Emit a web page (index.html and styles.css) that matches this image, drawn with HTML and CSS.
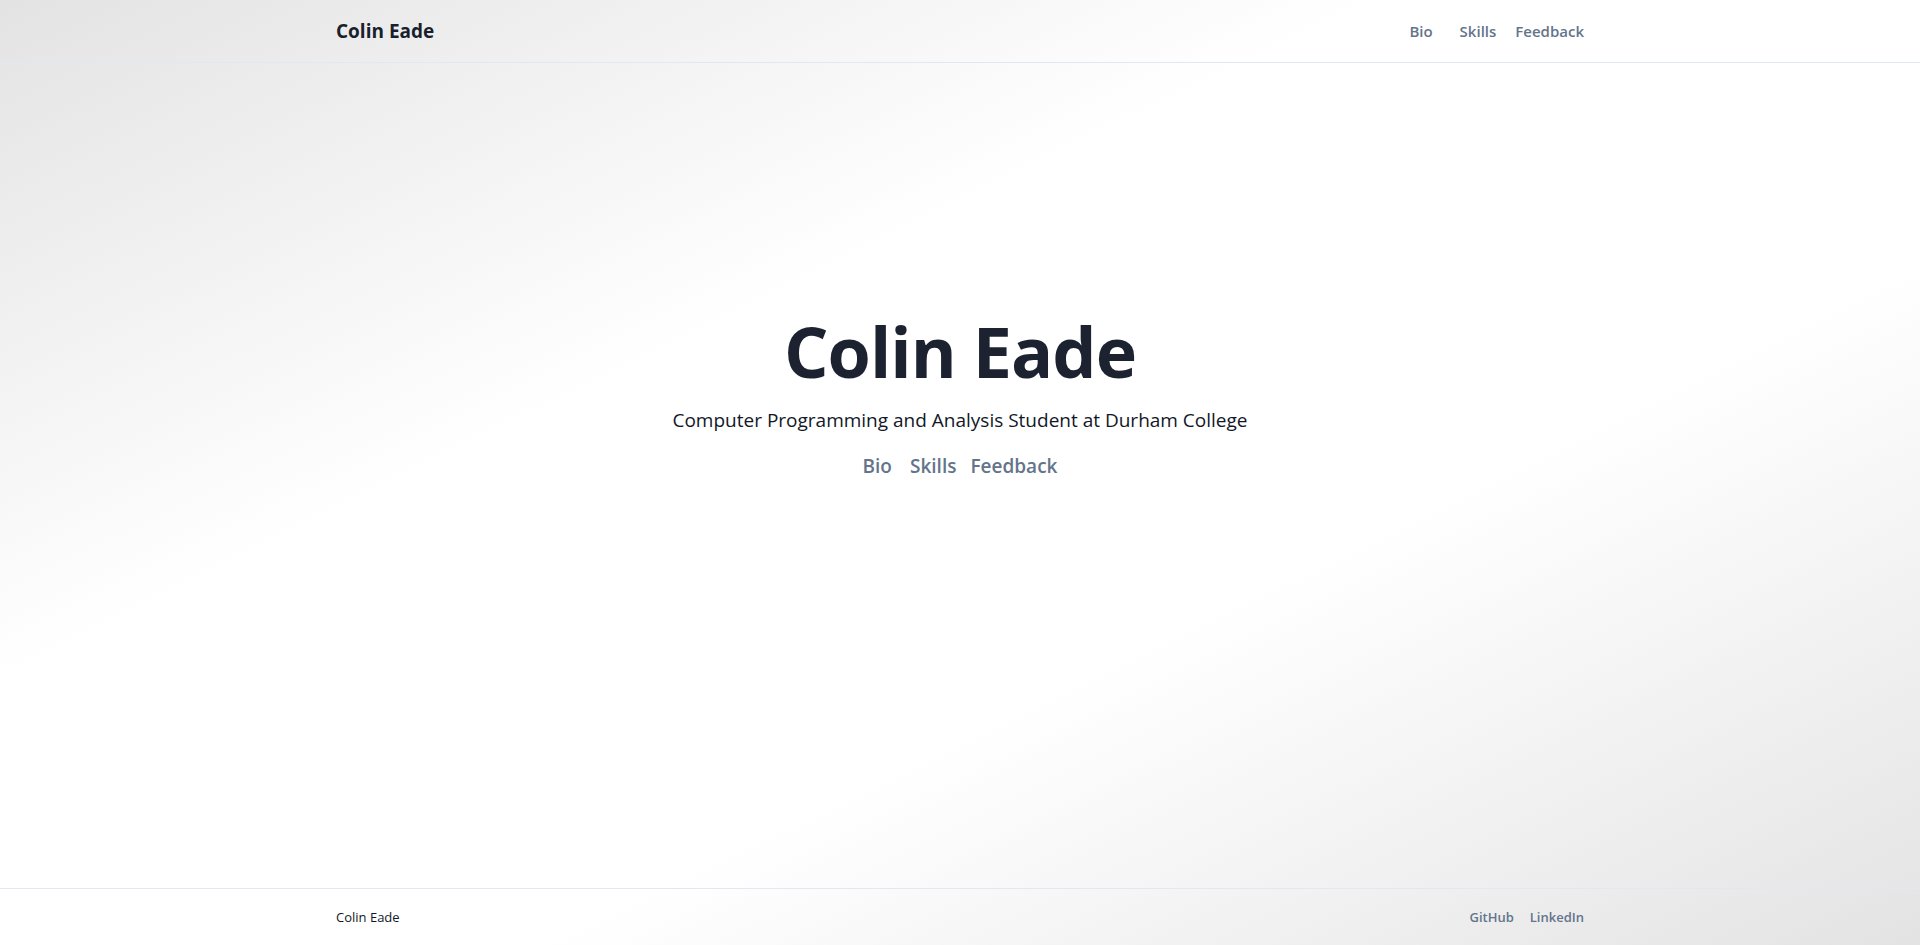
FILE: index.html
```html
<!DOCTYPE html>
<html lang="en">
<head>
<meta charset="utf-8">
<title>Colin Eade</title>
<link rel="stylesheet" href="styles.css">
</head>
<body>
<div class="page">
  <header class="site-header">
    <div class="container header-inner">
      <a class="brand" href="#">Colin Eade</a>
      <nav class="top-nav">
        <a class="top-link link-bio" href="#bio">Bio</a>
        <a class="top-link link-skills" href="#skills">Skills</a>
        <a class="top-link" href="#feedback">Feedback</a>
      </nav>
    </div>
  </header>
  <main class="hero">
    <h1 class="hero-title">Colin Eade</h1>
    <p class="hero-subtitle">Computer Programming and Analysis Student at Durham College</p>
    <nav class="hero-nav">
      <a class="hero-link hero-bio" href="#bio">Bio</a>
      <a class="hero-link hero-skills" href="#skills">Skills</a>
      <a class="hero-link" href="#feedback">Feedback</a>
    </nav>
  </main>
  <footer class="site-footer">
    <div class="container footer-inner">
      <span class="footer-name">Colin Eade</span>
      <nav class="footer-nav">
        <a class="footer-link" href="#">GitHub</a>
        <a class="footer-link" href="#">LinkedIn</a>
      </nav>
    </div>
  </footer>
</div>
</body>
</html>
```
FILE: styles.css
```css
* { box-sizing: border-box; }
html, body { margin: 0; padding: 0; }
body {
  font-family: "Open Sans", "Noto Sans", sans-serif;
  color: #111827;
  background: linear-gradient(to bottom right, #e3e3e3 0%, #ffffff 36%, #ffffff 64%, #e3e3e3 100%);
  min-height: 100vh;
}
a { text-decoration: none; }
.page {
  min-height: 100vh;
  display: flex;
  flex-direction: column;
}
.container {
  max-width: 1280px;
  margin: 0 auto;
  padding: 0 16px;
  width: 100%;
}
.site-header {
  height: 63px;
  border-bottom: 1px solid #e2e8f0;
}
.header-inner {
  height: 62px;
  display: flex;
  align-items: center;
  justify-content: space-between;
}
.brand {
  font-size: 19px;
  font-weight: 700;
  color: #1a1f2e;
}
.top-nav { display: flex; }
.top-link {
  font-size: 15px;
  font-weight: 600;
  color: #64748b;
}
.link-bio { margin-right: 27px; }
.link-skills { margin-right: 19px; }
.hero {
  flex: 1;
  display: flex;
  flex-direction: column;
  align-items: center;
  justify-content: center;
  padding-bottom: 156px;
}
.hero-title {
  margin: 0;
  font-size: 70px;
  line-height: 1;
  font-weight: 700;
  color: #1c2230;
  letter-spacing: -1px;
}
.hero-subtitle {
  margin: 20px 0 0;
  font-size: 19px;
  line-height: 28px;
  color: #111827;
}
.hero-nav {
  display: flex;
  margin-top: 18px;
}
.hero-link {
  font-size: 19px;
  font-weight: 600;
  line-height: 28px;
  color: #64748b;
}
.hero-bio { margin-right: 18px; }
.hero-skills { margin-right: 14px; }
.site-footer {
  height: 57px;
  border-top: 1px solid #e2e8f0;
}
.footer-inner {
  height: 56px;
  display: flex;
  align-items: center;
  justify-content: space-between;
}
.footer-name {
  font-size: 13px;
  color: #111827;
}
.footer-nav { display: flex; gap: 16px; }
.footer-link {
  font-size: 13px;
  font-weight: 600;
  color: #64748b;
}
```
